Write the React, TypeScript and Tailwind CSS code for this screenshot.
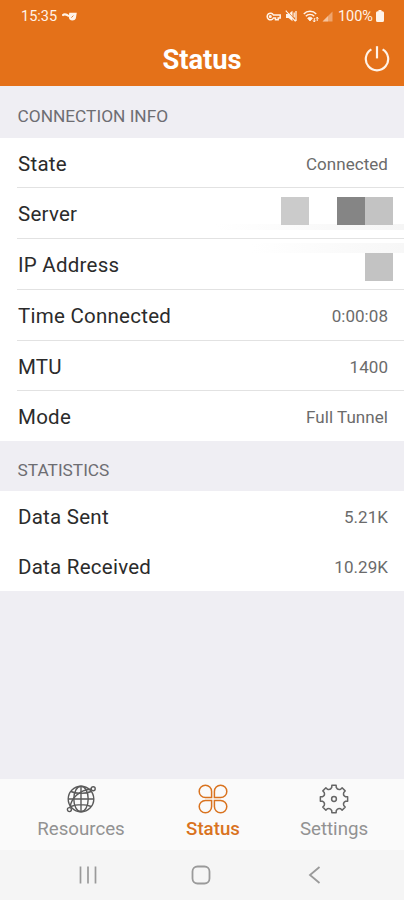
import type { ReactNode } from "react";
import clsx from "clsx";

function KeyIcon() {
  return (
    <svg width="15" height="9" viewBox="0 0 15 9" fill="none" stroke="currentColor" strokeWidth="1.5">
      <path d="M7.4 3A3.3 3.3 0 1 0 7.4 6H9.5V7.8H12.2V6H14.2V3Z" />
      <circle cx="4.3" cy="4.5" r="0.8" />
    </svg>
  );
}

function MuteIcon() {
  return (
    <svg width="12" height="12" viewBox="0 0 12 12" fill="currentColor">
      <path d="M1 4H3.5L7.5 0.8V11.2L3.5 8H1Z" />
      <path d="M0.8 0.6L10.6 11.4M9.2 2.6V7.6M11 1V11" stroke="currentColor" strokeWidth="1.3" />
      <path d="M2.2 0.8L8.5 7.8" stroke="#e47119" strokeWidth="0.7" />
    </svg>
  );
}

function WifiIcon() {
  return (
    <svg width="17" height="13" viewBox="0 0 17 13" fill="none" stroke="currentColor">
      <path d="M0.8 4C4 0.4 10 0.4 13.2 4M2.8 6.2C5 3.8 9 3.8 11.2 6.2" strokeWidth="1.4" />
      <path d="M4.6 8.2C6 6.8 8 6.8 9.4 8.2L7 11Z" fill="currentColor" strokeWidth="0.8" />
      <path d="M11.3 12V8M10.1 10.4L11.3 12L12.4 10.6M14.2 7.2V11M13 8.6L14.2 7.2L15.4 8.6" strokeWidth="1" />
    </svg>
  );
}

function SignalIcon() {
  return (
    <svg width="11" height="11" viewBox="0 0 11 11" fill="currentColor">
      <path d="M0.5 10.5L10.5 0.5V10.5Z" opacity="0.4" />
      <path d="M0.5 10.5L6 5V10.5Z" opacity="0.4" />
    </svg>
  );
}

function BatteryIcon() {
  return (
    <svg width="8" height="12" viewBox="0 0 8 12" fill="currentColor">
      <path d="M2.5 0H5.5V1.3H6.5Q8 1.3 8 2.8V10.5Q8 12 6.5 12H1.5Q0 12 0 10.5V2.8Q0 1.3 1.5 1.3H2.5Z" />
    </svg>
  );
}

function NotificationIcon() {
  return (
    <svg width="15" height="9" viewBox="0 0 15 9" fill="none" stroke="currentColor">
      <path d="M0.3 3.7C2 1.8 4.5 2.2 7 4.2" strokeWidth="2" />
      <path d="M7.3 0.8H14.8L13.8 6.5Q13 8.5 10.5 8.5Q6.8 8.5 6.8 4.6Z" fill="currentColor" stroke="none" />
      <path d="M9.4 5.6L11.4 3.6" stroke="#e47119" strokeWidth="0.9" />
    </svg>
  );
}

function PowerIcon() {
  return (
    <svg width="26" height="26" viewBox="0 0 26 26" fill="none" stroke="currentColor" strokeWidth="2.2">
      <path d="M13 0.2V12.4" />
      <path d="M7.4 3.4A11.2 11.2 0 1 0 18.6 3.4" />
    </svg>
  );
}

function GlobeIcon() {
  return (
    <svg width="30" height="30" viewBox="0 0 30 30" fill="none" stroke="#5a5a5a" strokeWidth="1.4">
      <circle cx="15" cy="15" r="12.8" />
      <ellipse cx="15" cy="15" rx="7.2" ry="12.8" />
      <path d="M15 2.2V27.8M2.2 15H27.8M4.8 7.5C10 10 20 10 25.2 7.5M4.8 22.5C10 20 20 20 25.2 22.5" />
      <path d="M4 23.6C5 14.5 13 6 25.4 5" />
      <circle cx="27.2" cy="4.8" r="2" />
      <circle cx="3.4" cy="25.6" r="2" />
    </svg>
  );
}

function CloverIcon() {
  return (
    <svg width="30" height="30" viewBox="0 0 30 30" fill="none" stroke="currentColor" strokeWidth="1.5">
      <path d="M13.6 13.6V7.4A6.2 6.2 0 1 0 7.4 13.6Z" />
      <path d="M16.4 13.6V7.4A6.2 6.2 0 1 1 22.6 13.6Z" />
      <path d="M13.6 16.4V22.6A6.2 6.2 0 1 1 7.4 16.4Z" />
      <path d="M16.4 16.4V22.6A6.2 6.2 0 1 0 22.6 16.4Z" />
    </svg>
  );
}

function polar(r: number, deg: number) {
  const a = (deg * Math.PI) / 180;
  return `${(15 + r * Math.cos(a)).toFixed(2)} ${(15 + r * Math.sin(a)).toFixed(2)}`;
}

// eight teeth, one every 45 degrees
const gearPath =
  Array.from({ length: 8 }, (_, i) => {
    const a = i * 45;
    return `${i === 0 ? "M" : "L"}${polar(13.8, a - 9)}L${polar(13.8, a + 9)}L${polar(11.8, a + 11)}Q${polar(9.4, a + 22.5)} ${polar(11.8, a + 34)}`;
  }).join("") + "Z";

function GearIcon() {
  return (
    <svg width="30" height="30" viewBox="0 0 30 30" fill="none" stroke="#666666" strokeWidth="1.5" strokeLinejoin="round">
      <path d={gearPath} />
      <circle cx="15" cy="15" r="2.4" />
    </svg>
  );
}

function SectionHeader({ children }: { children: ReactNode }) {
  return (
    <h2 className="flex-1 pl-[17.5px] text-[17.3px] leading-6 text-[#6d6d72]">{children}</h2>
  );
}

function Row({ label, last, tall, children }: { label: string; last?: boolean; tall?: boolean; children?: ReactNode }) {
  return (
    <div
      className={clsx(
        "relative ml-[17px] flex items-center justify-between pt-0.5 pr-4 pl-px",
        tall ? "h-[51px]" : "h-[50px]",
        !last && "border-b border-[#e2e2e2]"
      )}
    >
      <span className="text-[20.5px] leading-6 tracking-[0.25px] text-[#2b2b2b]">{label}</span>
      <span className="flex text-[17px] leading-6 tracking-[0.05px] text-[#6b6b6b]">{children}</span>
    </div>
  );
}

function Tab({ label, icon, active, className }: { label: string; icon: ReactNode; active?: boolean; className: string }) {
  return (
    <button className={clsx("flex flex-col items-center", active ? "text-[#d9731f]" : "text-[#929292]", className)}>
      {icon}
      <span className={clsx("mt-[3px] text-[18.7px] leading-6", active && "font-medium")}>{label}</span>
    </button>
  );
}

export default function App() {
  return (
    <div className="flex h-[900px] w-[404px] flex-col overflow-hidden bg-[#efeef3] font-[Roboto,sans-serif]">
      <header className="h-[86px] bg-[#e47119] text-[#fff3e8]">
        <div className="flex h-8 items-center pr-[20px] pl-[21px] text-[14.5px]">
          <span className="pt-px">15:35</span>
          <span className="ml-[5px]"><NotificationIcon /></span>
          <div className="ml-auto flex items-center">
            <KeyIcon />
            <span className="ml-1"><MuteIcon /></span>
            <span className="ml-1.5"><WifiIcon /></span>
            <span className="ml-0.5"><SignalIcon /></span>
            <span className="ml-[5px] pt-px">100%</span>
            <span className="ml-[3px]"><BatteryIcon /></span>
          </div>
        </div>
        <div className="grid h-[54px] grid-cols-[1fr_auto_1fr] items-center">
          <h1 className="col-start-2 pt-0.5 text-[27.3px] leading-8 font-bold text-white">Status</h1>
          <button className="mr-[14px] justify-self-end"><PowerIcon /></button>
        </div>
      </header>

      <div className="flex h-[52px] items-center pt-2">
        <SectionHeader>CONNECTION INFO</SectionHeader>
      </div>
      <section className="bg-white">
        <Row label="State">Connected</Row>
        <Row label="Server" tall>
          <span className="absolute right-0 bottom-2 h-1.5 w-[188px] bg-linear-to-r from-transparent to-[#f5f5f5]" />
          <span className="relative -mt-1.5 -mr-[5px] flex">
            <span className="mr-7 size-7 bg-[#cbcbcb]" />
            <span className="size-7 bg-[#858585]" />
            <span className="size-7 bg-[#c3c3c3]" />
          </span>
        </Row>
        <Row label="IP Address" tall>
          <span className="absolute top-1 right-0 h-2.5 w-[152px] bg-linear-to-r from-transparent to-[#f7f7f7]" />
          <span className="relative mt-[3px] -mr-[5px] size-7 bg-[#c3c3c3]" />
        </Row>
        <Row label="Time Connected" tall>0:00:08</Row>
        <Row label="MTU">1400</Row>
        <Row label="Mode" last>Full Tunnel</Row>
      </section>

      <div className="flex h-[50px] items-center pt-2">
        <SectionHeader>STATISTICS</SectionHeader>
      </div>
      <section className="bg-white">
        <Row label="Data Sent" last>5.21K</Row>
        <Row label="Data Received" last>10.29K</Row>
      </section>

      <nav className="mt-auto flex h-[71px] bg-[#fafafa] pt-[5px]">
        <Tab label="Resources" icon={<GlobeIcon />} className="ml-[26px] w-[110px]" />
        <Tab label="Status" icon={<CloverIcon />} active className="ml-[27px] w-[100px]" />
        <Tab label="Settings" icon={<GearIcon />} className="ml-[21px] w-[100px]" />
      </nav>

      <div className="flex h-[50px] items-center bg-[#f5f5f5] text-[#9a9a9a]">
        <svg className="ml-[78px]" width="20" height="18" viewBox="0 0 20 18" stroke="currentColor" strokeWidth="1.7">
          <path d="M2.5 0.5V17.5M10 0.5V17.5M17.5 0.5V17.5" />
        </svg>
        <svg className="ml-[93px]" width="20" height="20" viewBox="0 0 20 20" fill="none" stroke="currentColor" strokeWidth="1.8">
          <rect x="1.5" y="1.5" width="17" height="17" rx="5" />
        </svg>
        <svg className="ml-[97px]" width="13" height="18" viewBox="0 0 13 18" fill="none" stroke="currentColor" strokeWidth="1.8">
          <path d="M11.5 1L2 9L11.5 17" />
        </svg>
      </div>
    </div>
  );
}
